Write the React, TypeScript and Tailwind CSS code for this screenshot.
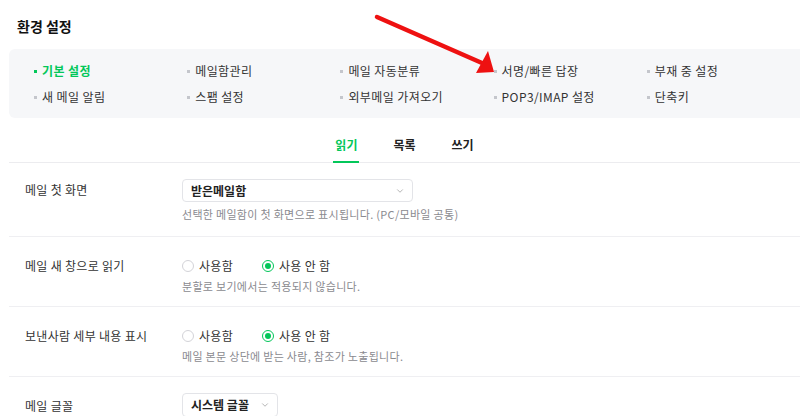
import { ChevronDown } from "lucide-react";

const NAV = [
  ["기본 설정", "메일함관리", "메일 자동분류", "서명/빠른 답장", "부재 중 설정"],
  ["새 메일 알림", "스팸 설정", "외부메일 가져오기", "POP3/IMAP 설정", "단축키"],
];

const font = { fontFamily: '"Noto Sans CJK KR", "Noto Sans", sans-serif' };

function Radio({ checked, label }: { checked?: boolean; label: string }) {
  return (
    <label className="flex items-center gap-[5px] w-[80px]">
      <span
        className={
          checked
            ? "w-[12px] h-[12px] rounded-full border border-[#03c75a] flex items-center justify-center bg-white"
            : "w-[12px] h-[12px] rounded-full border border-[#d3d3d8] bg-white"
        }
      >
        {checked && <span className="w-[6px] h-[6px] rounded-full bg-[#03c75a]" />}
      </span>
      <span className="text-[12px] text-[#333] tracking-[0.3px]">{label}</span>
    </label>
  );
}

function Row({ label, children, className }: { label: string; children: React.ReactNode; className?: string }) {
  return (
    <div className={"flex border-b border-[#efeff2] " + (className ?? "")}>
      <div className="w-[173px] pl-[16px] text-[12px] text-[#333] leading-[22px] tracking-[0.3px]">{label}</div>
      <div className="flex-1">{children}</div>
    </div>
  );
}

export default function App() {
  return (
    <div className="relative w-[800px] h-[416px] overflow-hidden bg-white pl-[9px]" style={font}>
      {/* header */}
      <h1 className="pl-[8px] pt-[15px] h-[49px] text-[14px] font-bold text-[#111] leading-[22px]">환경 설정</h1>

      {/* settings nav */}
      <div className="h-[69px] rounded-l-[6px] bg-[#f6f7f9] pl-[25px] pt-[9px]">
        {NAV.map((row, ri) => (
          <div key={ri} className="flex h-[26px] items-center">
            {row.map((item, ci) => {
              const active = ri === 0 && ci === 0;
              return (
                <div key={item} className="w-[154px] flex items-center gap-[5px]">
                  <span className={active ? "w-[3px] h-[3px] bg-[#03c75a]" : "w-[3px] h-[3px] bg-[#c4c6cc]"} />
                  <span
                    className={
                      active
                        ? "text-[12px] font-bold text-[#03c75a] tracking-[0.4px]"
                        : "text-[12px] text-[#333] tracking-[0.4px]"
                    }
                  >
                    {item}
                  </span>
                </div>
              );
            })}
          </div>
        ))}
      </div>

      {/* tabs */}
      <div className="flex justify-center border-b border-[#ececef] mt-[17px] h-[28px]">
        {["읽기", "목록", "쓰기"].map((t, i) => (
          <div key={t} className="px-[18px] relative">
            <span
              className={
                i === 0
                  ? "text-[12px] font-bold text-[#03c75a] leading-[20px] block"
                  : "text-[12px] font-bold text-[#222] leading-[20px] block"
              }
            >
              {t}
            </span>
            {i === 0 && <span className="absolute left-[16px] right-[16px] bottom-[-1px] h-[2px] bg-[#03c75a]" />}
          </div>
        ))}
      </div>

      {/* rows */}
      <Row label="메일 첫 화면" className="pt-[16px] pb-[13px]">
        <div className="w-[231px] h-[23px] border border-[#e3e4e8] rounded-[4px] flex items-center justify-between pl-[8px] pr-[7px]">
          <span className="text-[12px] font-bold text-[#222]">받은메일함</span>
          <ChevronDown size={10} className="text-[#888]" strokeWidth={1.5} />
        </div>
        <p className="mt-[3px] text-[11px] text-[#8a8a8f] leading-[18px] tracking-[0.3px]">
          선택한 메일함이 첫 화면으로 표시됩니다. (PC/모바일 공통)
        </p>
      </Row>

      <Row label="메일 새 창으로 읽기" className="pt-[18px] pb-[11px]">
        <div className="flex h-[22px] items-center">
          <Radio label="사용함" />
          <Radio checked label="사용 안 함" />
        </div>
        <p className="text-[11px] text-[#8a8a8f] leading-[18px] tracking-[0.3px]">분할로 보기에서는 적용되지 않습니다.</p>
      </Row>

      <Row label="보낸사람 세부 내용 표시" className="pt-[18px] pb-[11px]">
        <div className="flex h-[22px] items-center">
          <Radio label="사용함" />
          <Radio checked label="사용 안 함" />
        </div>
        <p className="text-[11px] text-[#8a8a8f] leading-[18px] tracking-[0.3px]">
          메일 본문 상단에 받는 사람, 참조가 노출됩니다.
        </p>
      </Row>

      <div className="flex pt-[16px]">
        <div className="w-[173px] pl-[16px] text-[12px] text-[#333] leading-[23px] pt-[1px] tracking-[0.3px]">메일 글꼴</div>
        <div className="w-[96px] h-[24px] border border-[#e3e4e8] rounded-[4px] flex items-center justify-between pl-[8px] pr-[7px]">
          <span className="text-[12px] font-bold text-[#222]">시스템 글꼴</span>
          <ChevronDown size={10} className="text-[#888]" strokeWidth={1.5} />
        </div>
      </div>

      {/* annotation arrow */}
      <svg className="absolute left-0 top-0 pointer-events-none" width="800" height="416">
        <line x1="377" y1="17" x2="482" y2="63" stroke="#ee1111" strokeWidth="4.5" strokeLinecap="round" />
        <polygon points="494,72 476,73 488,51" fill="#ee1111" />
      </svg>
    </div>
  );
}
